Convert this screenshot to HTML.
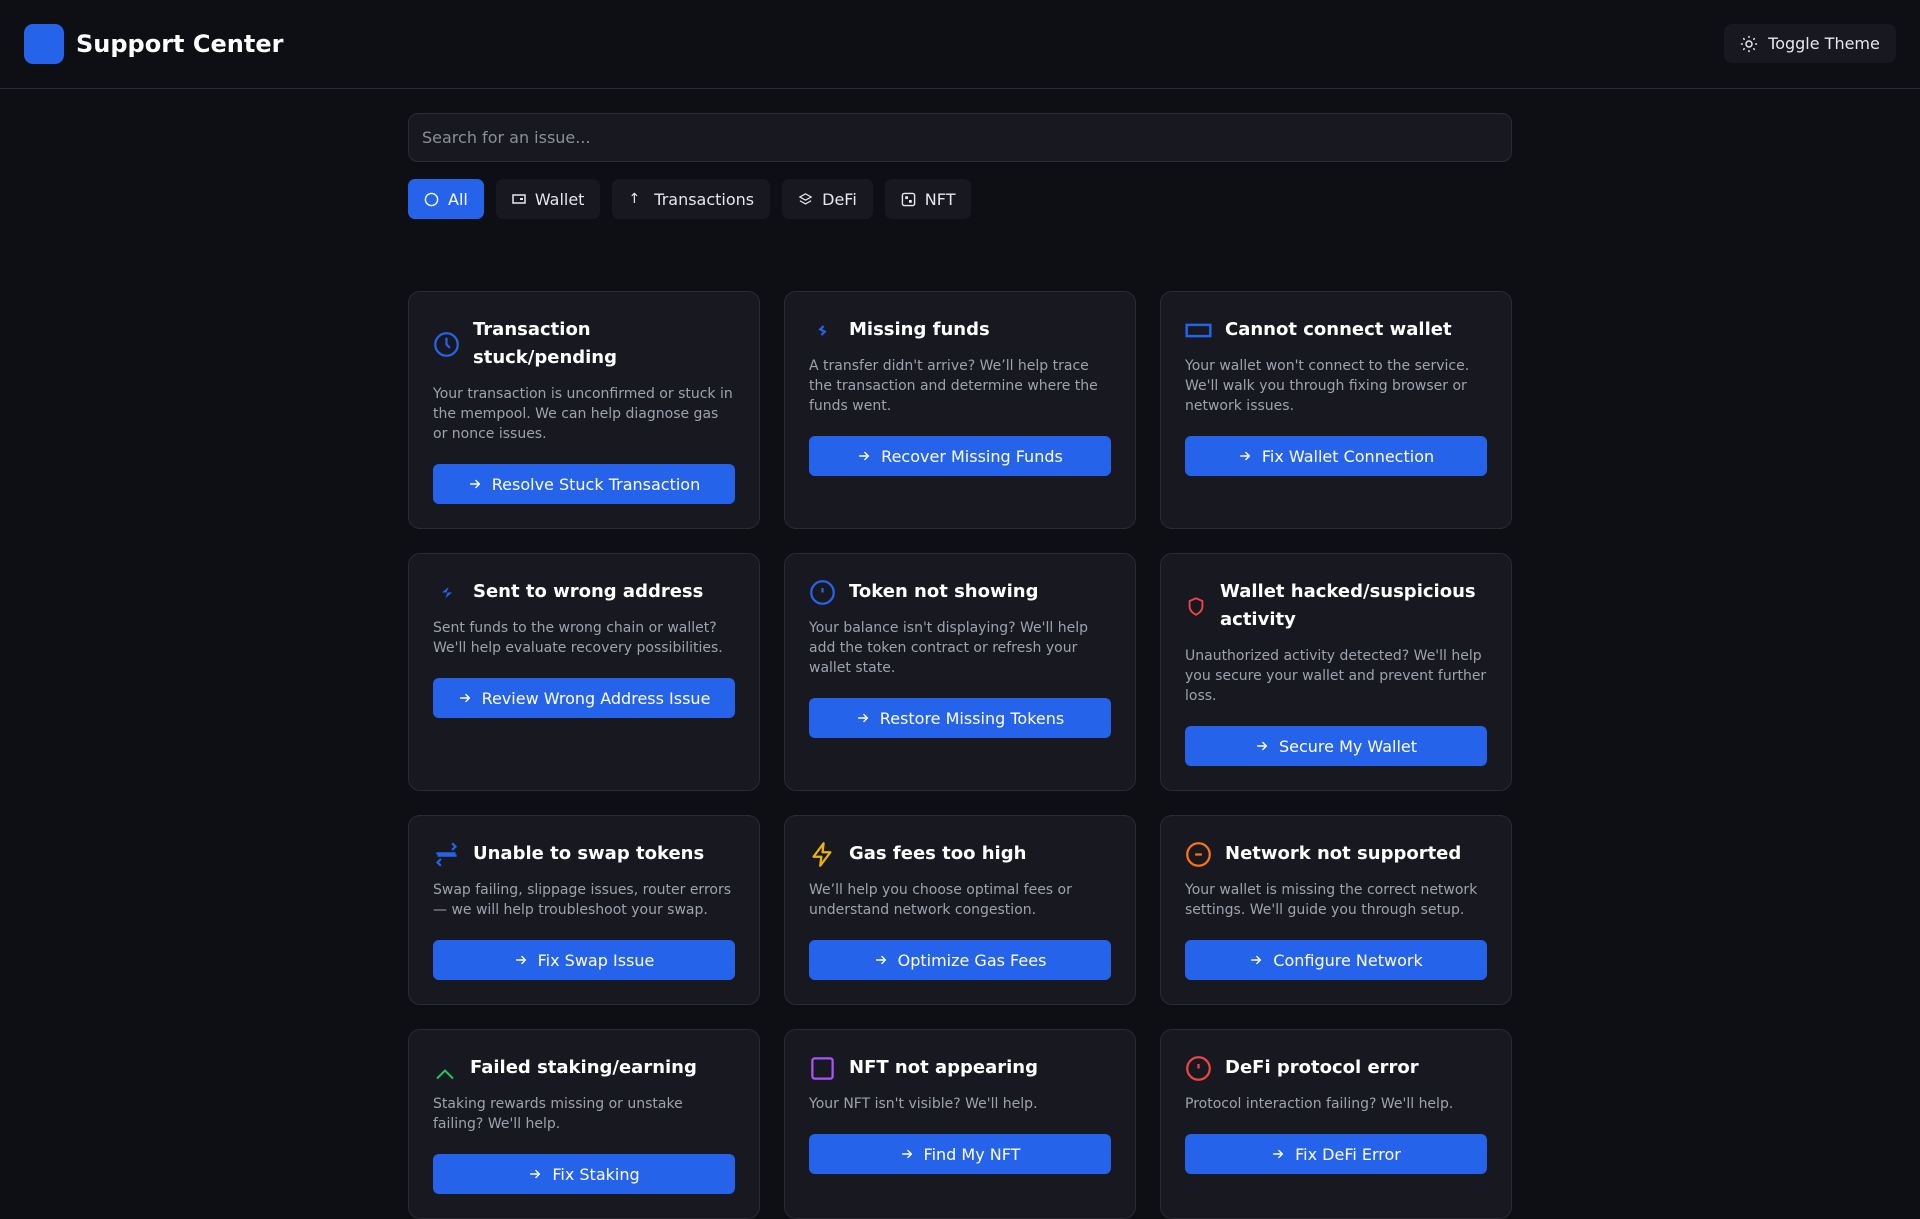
<!DOCTYPE html>
<html><head><meta charset="utf-8"><style>
*{box-sizing:border-box;margin:0;padding:0}
body{width:1920px;height:1080px;overflow:hidden;background:#0e0f14;font-family:"DejaVu Sans","Liberation Sans",sans-serif;color:#fff}
header{height:89px;border-bottom:1px solid #2a2b33;position:relative}
.logo{position:absolute;left:24px;top:24px;width:40px;height:40px;border-radius:9px;background:#2563eb}
.brand{position:absolute;left:76px;top:28px;font-size:24px;font-weight:bold;line-height:32px}
.toggle{position:absolute;left:1724px;top:24px;width:172px;height:39px;border-radius:8px;background:#181920;display:flex;align-items:center;justify-content:center;gap:10px;font-size:16px;color:#e5e7eb}
.wrap{position:absolute;left:408px;width:1104px;top:113px}
.search{height:49px;border:1px solid #2a2b33;border-radius:10px;background:#181920;padding-left:13px;display:flex;align-items:center;color:#8b8f99;font-size:16px}
.filters{display:flex;gap:12px;margin-top:17px}
.f{height:40px;border-radius:7px;background:#181920;display:flex;align-items:center;padding:0 16px;gap:9px;font-size:16px;color:#e5e7eb}
.f.on{background:#2563eb;color:#fff}
.grid{position:absolute;left:408px;top:291px;width:1104px;display:grid;grid-template-columns:repeat(3,352px);column-gap:24px;row-gap:24px}
.card{background:#181920;border:1px solid #2a2b33;border-radius:12px;padding:24px 24px}
.h{display:flex;align-items:center;gap:13px;font-size:18px;font-weight:bold;line-height:28px;min-height:28px}
.h svg{flex:none}
.d{margin-top:12px;font-size:14px;line-height:20px;color:#9ca3af}
.b{margin-top:20px;height:40px;border-radius:6px;background:#2563eb;display:flex;align-items:center;justify-content:center;gap:10px;font-size:16px}
</style></head><body>
<svg width="0" height="0" style="position:absolute"><symbol id="ar" viewBox="0 0 16 16"><path d="M3 8h10M9 4l4 4-4 4" fill="none" stroke="#fff" stroke-width="1.6" stroke-linecap="round" stroke-linejoin="round"/></symbol></svg>
<header><div class="logo"></div><div class="brand">Support Center</div>
<div class="toggle"><svg width="18" height="18" viewBox="0 0 24 24" fill="none" stroke="#e5e7eb" stroke-width="2" stroke-linecap="round"><circle cx="12" cy="12" r="4"/><path d="M12 2v1M12 21v1M4.9 4.9l.7.7M18.4 18.4l.7.7M2 12h1M21 12h1M4.9 19.1l.7-.7M18.4 5.6l.7-.7"/></svg>Toggle Theme</div></header>
<div class="wrap">
<div class="search">Search for an issue...</div>
<div class="filters">
<div class="f on"><svg width="15" height="15" viewBox="0 0 16 16"><circle cx="8" cy="8" r="6.5" fill="none" stroke="#fff" stroke-width="1.5"/></svg>All</div>
<div class="f"><svg width="14" height="10" viewBox="0 0 14 10"><rect x="1" y="1" width="12" height="8" fill="none" stroke="#e5e7eb" stroke-width="1.5"/><rect x="8" y="4" width="3" height="2" fill="#e5e7eb"/></svg>Wallet</div>
<div class="f"><span style="font-size:14px">↑</span>&nbsp;Transactions</div>
<div class="f"><svg width="15" height="15" viewBox="0 0 24 24" fill="none" stroke="#e5e7eb" stroke-width="2"><path d="M12 3l9 5-9 5-9-5z"/><path d="M3 14l9 5 9-5"/></svg>DeFi</div>
<div class="f"><svg width="15" height="15" viewBox="0 0 16 16"><rect x="1.5" y="1.5" width="13" height="13" rx="2" fill="none" stroke="#e5e7eb" stroke-width="1.5"/><rect x="4.5" y="4.5" width="3" height="3" fill="#e5e7eb"/><rect x="8.5" y="8.5" width="3" height="3" fill="#e5e7eb"/></svg>NFT</div>
</div></div>
<div class="grid">
<div class="card"><div class="h"><svg width="27" height="27" viewBox="0 0 24 24" fill="none" stroke="#2563eb" stroke-width="2"><circle cx="12" cy="12" r="10"/><path d="M12 6v6l3 3"/></svg><span>Transaction stuck/pending</span></div><div class="d">Your transaction is unconfirmed or stuck in the mempool. We can help diagnose gas or nonce issues.</div><div class="b"><svg width="14" height="14"><use href="#ar"/></svg>Resolve Stuck Transaction</div></div>
<div class="card"><div class="h"><svg width="27" height="27" viewBox="0 0 24 24" fill="none" stroke="#2563eb" stroke-width="2"><path d="M13 8l-3 3 4 2-3 3"/></svg><span>Missing funds</span></div><div class="d">A transfer didn't arrive? We’ll help trace the transaction and determine where the funds went.</div><div class="b"><svg width="14" height="14"><use href="#ar"/></svg>Recover Missing Funds</div></div>
<div class="card"><div class="h"><svg width="27" height="27" viewBox="0 0 24 24" fill="none" stroke="#2563eb" stroke-width="2.2"><rect x="1.5" y="7" width="21" height="10"/></svg><span>Cannot connect wallet</span></div><div class="d">Your wallet won't connect to the service. We'll walk you through fixing browser or network issues.</div><div class="b"><svg width="14" height="14"><use href="#ar"/></svg>Fix Wallet Connection</div></div>
<div class="card"><div class="h"><svg width="27" height="27" viewBox="0 0 24 24" fill="#2563eb"><path d="M8 12l6-5-2 5h5l-6 5 2-5z"/></svg><span>Sent to wrong address</span></div><div class="d">Sent funds to the wrong chain or wallet? We'll help evaluate recovery possibilities.</div><div class="b"><svg width="14" height="14"><use href="#ar"/></svg>Review Wrong Address Issue</div></div>
<div class="card"><div class="h"><svg width="27" height="27" viewBox="0 0 24 24" fill="none" stroke="#2563eb" stroke-width="2"><circle cx="12" cy="12" r="10"/><path d="M12 8v4"/></svg><span>Token not showing</span></div><div class="d">Your balance isn't displaying? We'll help add the token contract or refresh your wallet state.</div><div class="b"><svg width="14" height="14"><use href="#ar"/></svg>Restore Missing Tokens</div></div>
<div class="card"><div class="h"><svg width="22" height="27" viewBox="0 0 24 24" fill="none" stroke="#ef4444" stroke-width="2"><path d="M12 3l7 3v6c0 4-3 7-7 9-4-2-7-5-7-9V6z"/></svg><span>Wallet hacked/suspicious activity</span></div><div class="d">Unauthorized activity detected? We'll help you secure your wallet and prevent further loss.</div><div class="b"><svg width="14" height="14"><use href="#ar"/></svg>Secure My Wallet</div></div>
<div class="card"><div class="h"><svg width="27" height="27" viewBox="0 0 24 24" fill="none" stroke="#2563eb" stroke-width="2"><path d="M17 2l3 3-3 3M3 11h17M7 22l-3-3 3-3M21 13H4"/></svg><span>Unable to swap tokens</span></div><div class="d">Swap failing, slippage issues, router errors — we will help troubleshoot your swap.</div><div class="b"><svg width="14" height="14"><use href="#ar"/></svg>Fix Swap Issue</div></div>
<div class="card"><div class="h"><svg width="27" height="27" viewBox="0 0 24 24" fill="none" stroke="#eab308" stroke-width="2" stroke-linejoin="round"><path d="M13 2L4 14h7l-1 8 9-12h-7z"/></svg><span>Gas fees too high</span></div><div class="d">We’ll help you choose optimal fees or understand network congestion.</div><div class="b"><svg width="14" height="14"><use href="#ar"/></svg>Optimize Gas Fees</div></div>
<div class="card"><div class="h"><svg width="27" height="27" viewBox="0 0 24 24" fill="none" stroke="#f97316" stroke-width="2"><circle cx="12" cy="12" r="10"/><path d="M9 12h6"/></svg><span>Network not supported</span></div><div class="d">Your wallet is missing the correct network settings. We'll guide you through setup.</div><div class="b"><svg width="14" height="14"><use href="#ar"/></svg>Configure Network</div></div>
<div class="card"><div class="h"><svg width="24" height="27" viewBox="0 0 24 24" fill="none" stroke="#22c55e" stroke-width="2"><path d="M4 22l8-8 8 8"/></svg><span>Failed staking/earning</span></div><div class="d">Staking rewards missing or unstake failing? We'll help.</div><div class="b"><svg width="14" height="14"><use href="#ar"/></svg>Fix Staking</div></div>
<div class="card"><div class="h"><svg width="27" height="27" viewBox="0 0 24 24" fill="none" stroke="#a855f7" stroke-width="2"><rect x="3" y="3" width="18" height="18" rx="2"/></svg><span>NFT not appearing</span></div><div class="d">Your NFT isn't visible? We'll help.</div><div class="b"><svg width="14" height="14"><use href="#ar"/></svg>Find My NFT</div></div>
<div class="card"><div class="h"><svg width="27" height="27" viewBox="0 0 24 24" fill="none" stroke="#ef4444" stroke-width="2"><circle cx="12" cy="12" r="10"/><path d="M12 8v4"/></svg><span>DeFi protocol error</span></div><div class="d">Protocol interaction failing? We'll help.</div><div class="b"><svg width="14" height="14"><use href="#ar"/></svg>Fix DeFi Error</div></div>
</div>
</body></html>
